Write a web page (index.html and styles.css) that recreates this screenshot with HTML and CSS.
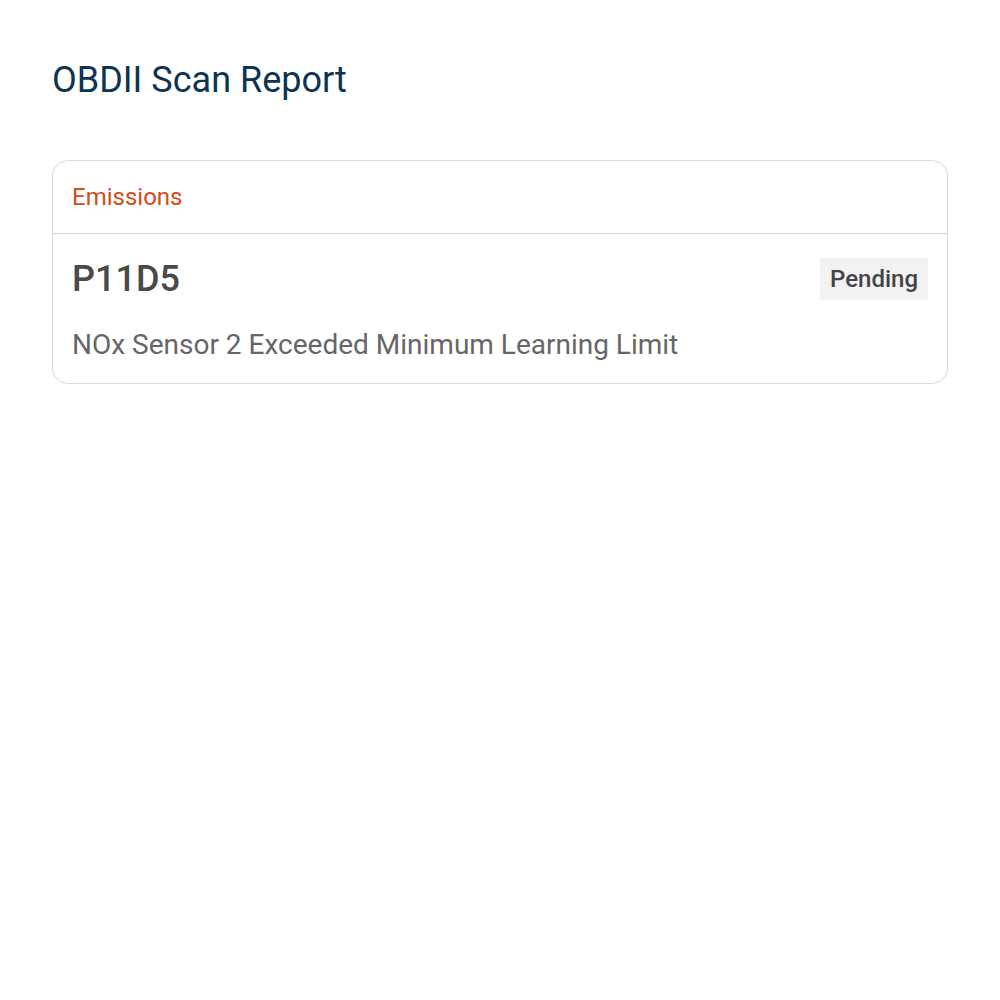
FILE: index.html
```html
<!DOCTYPE html>
<html lang="en">
<head>
    <meta charset="UTF-8">
    <meta name="viewport" content="width=device-width, initial-scale=1.0">
    <title>OBDII Scan Report</title>
    <link rel="stylesheet" href="styles.css">
</head>
<body>
    <div class="page">
        <h1 class="title">OBDII Scan Report</h1>
        <div class="card">
            <div class="card-header">Emissions</div>
            <div class="card-body">
                <div class="code-row">
                    <span class="code">P11D5</span>
                    <span class="status">Pending</span>
                </div>
                <p class="desc">NOx Sensor 2 Exceeded Minimum Learning Limit</p>
            </div>
        </div>
    </div>
</body>
</html>
```

FILE: styles.css
```css
body {
    font-family: Roboto, "Noto Sans", sans-serif;
    margin: 0;
    background: #fff;
}
.page {
    padding: 52px 52px;
}
.title {
    font-size: 36px;
    font-weight: 400;
    color: #0d3450;
    margin: 6px 0 58px;
    line-height: 44px;
}
.card {
    border: 1px solid #d9d9d9;
    border-radius: 16px;
}
.card-header {
    color: #d24d16;
    font-size: 24px;
    padding: 20px 19px;
    line-height: 32px;
    border-bottom: 1px solid #d4d4d4;
}
.card-body {
    padding: 24px 19px 22px;
}
.code-row {
    display: flex;
    justify-content: space-between;
    align-items: center;
    height: 42px;
}
.code {
    font-size: 36px;
    font-weight: 500;
    color: #4a4a4a;
}
.status {
    background: #f2f2f5;
    color: #444;
    font-size: 24px;
    font-weight: 500;
    line-height: 28px;
    padding: 7px 10px;
}
.desc {
    margin: 28px 0 0;
    font-size: 28px;
    line-height: 33px;
    color: #666;
}
```
